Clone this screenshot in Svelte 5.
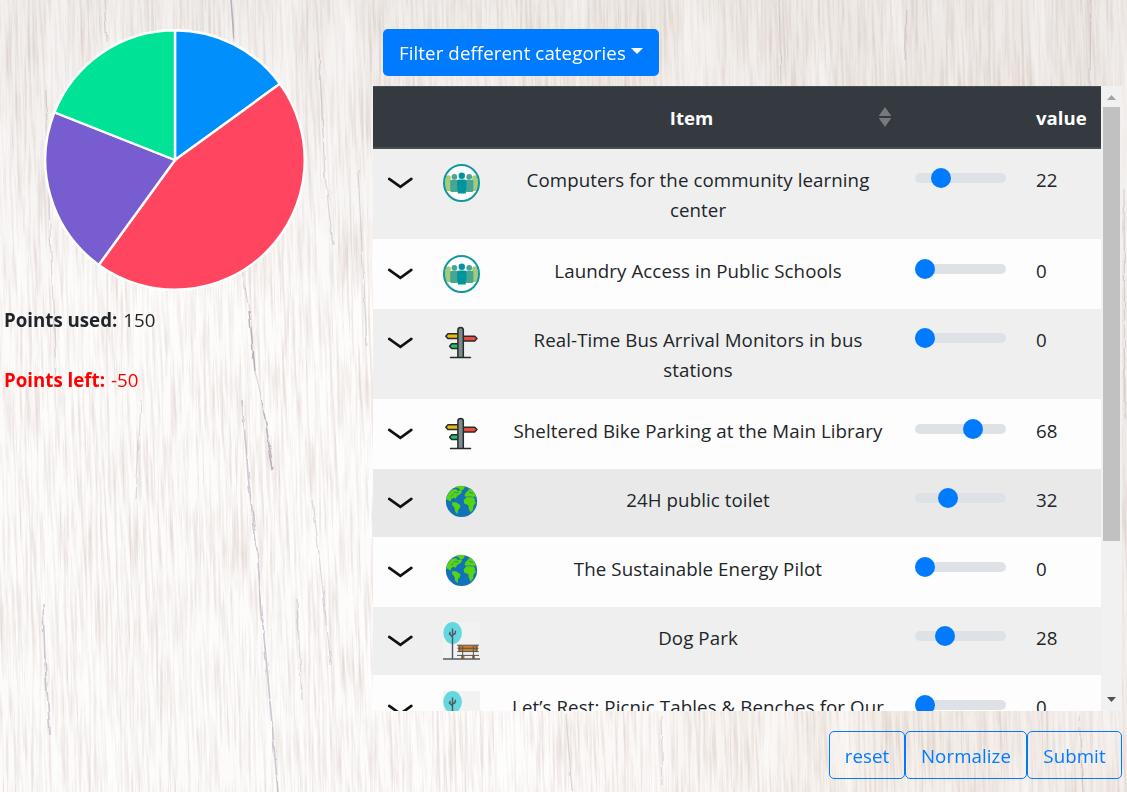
<script>
  const items = [
    { lines: ['Computers for the community learning', 'center'], icon: 'people', value: 22 },
    { lines: ['Laundry Access in Public Schools'], icon: 'people', value: 0 },
    { lines: ['Real-Time Bus Arrival Monitors in bus', 'stations'], icon: 'sign', value: 0 },
    { lines: ['Sheltered Bike Parking at the Main Library'], icon: 'sign', value: 68 },
    { lines: ['24H public toilet'], icon: 'globe', value: 32, active: true },
    { lines: ['The Sustainable Energy Pilot'], icon: 'globe', value: 0 },
    { lines: ['Dog Park'], icon: 'park', value: 28 },
    { lines: ['Let’s Rest: Picnic Tables & Benches for Our'], icon: 'park', value: 0 }
  ];

  const shares = [
    { from: 0, to: 0.15, color: '#008ffb' },
    { from: 0.15, to: 0.6, color: '#ff4560' },
    { from: 0.6, to: 0.81, color: '#775dd0' },
    { from: 0.81, to: 1, color: '#00e396' }
  ];
  const point = (t) => `${131 + 129.7 * Math.sin(t * 2 * Math.PI)} ${131 - 129.7 * Math.cos(t * 2 * Math.PI)}`;
  const slice = (s) => `M131 131L${point(s.from)}A129.7 129.7 0 0 1 ${point((s.from + s.to) / 2)}A129.7 129.7 0 0 1 ${point(s.to)}Z`;
</script>

<svg class="wood" width="1127" height="792" viewBox="0 0 1127 792" aria-hidden="true">
  <defs>
    <linearGradient id="tone" x1="0" y1="0.35" x2="1" y2="0.1">
      <stop offset="0" stop-color="#fcfbfa" /><stop offset="0.3" stop-color="#fdfcfb" />
      <stop offset="0.6" stop-color="#f4eee9" /><stop offset="1" stop-color="#efe9e6" />
    </linearGradient>
    <linearGradient id="shade" x1="0" y1="0" x2="0" y2="1">
      <stop offset="0" stop-color="#eae6e2" stop-opacity="0.75" /><stop offset="0.4" stop-color="#ebe6e3" stop-opacity="0" />
      <stop offset="1" stop-color="#ebe6e3" stop-opacity="0" />
    </linearGradient>
    <filter id="grain" x="0" y="0" width="1" height="1" color-interpolation-filters="sRGB">
      <feTurbulence type="fractalNoise" baseFrequency="0.42 0.014" numOctaves="4" seed="7" />
      <feColorMatrix values="0 0 0 0 0.75  0 0 0 0 0.65  0 0 0 0 0.62  2.3 0 0 0 -0.98" />
    </filter>
    <filter id="light" x="0" y="0" width="1" height="1" color-interpolation-filters="sRGB">
      <feTurbulence type="fractalNoise" baseFrequency="0.035 0.005" numOctaves="4" seed="19" />
      <feColorMatrix values="0 0 0 0 1  0 0 0 0 1  0 0 0 0 1  0 2.6 0 0 -1.1" />
    </filter>
    <filter id="rough" filterUnits="userSpaceOnUse" x="0" y="0" width="1127" height="792">
      <feTurbulence type="fractalNoise" baseFrequency="0.12 0.06" numOctaves="2" seed="3" />
      <feDisplacementMap in="SourceGraphic" scale="4" xChannelSelector="R" yChannelSelector="G" />
      <feGaussianBlur stdDeviation="0.7 0.5" />
    </filter>
  </defs>
  <rect width="1127" height="792" fill="url(#tone)" />
  <rect width="1127" height="792" fill="url(#shade)" />
  <g transform="rotate(-1.5 560 400)">
    <rect x="-30" y="-30" width="1190" height="860" filter="url(#grain)" opacity="0.42" />
    <rect x="-30" y="-30" width="1190" height="860" filter="url(#light)" opacity="0.5" />
  </g>
  <g class="cracks" filter="url(#rough)">
    <path d="M104 0L107 42M231 0L234 42M319 50L325 175L333 245M242 270L249 310L255 370L263 405L273 470" />
    <path class="deep" d="M231 0L234 38M249 310L255 370M262 400L273 470M242 400L249 485L257 550L263 625L269 690L278 792M43 605L45 660L50 735" />
    <path d="M46 90L50 230L56 375M297 600L302 700M313 500L331 665M358 170L367 345M141 400L136 500" />
    <path d="M1091 0L1090 86M907 10L905 60M779 0L781 85M1079 715L1083 792M1124 190L1125 420M566 714L572 792M661 716L663 785" />
  </g>
</svg>

<main>
  <aside>
    <svg class="pie" width="262" height="262" viewBox="0 0 262 262">
      {#each shares as s}
        <path d={slice(s)} fill={s.color} stroke="#fff" stroke-width="2.4" />
      {/each}
    </svg>
    <p><b>Points used:</b> 150</p>
    <p class="over"><b>Points left:</b> -50</p>
  </aside>

  <section>
    <button class="filter">Filter defferent categories<span class="caret"></span></button>

    <div class="pane">
      <div class="table">
        <div class="row head">
          <span></span><span></span>
          <div class="item"><span class="label">Item</span>
            <svg width="14" height="20" viewBox="0 0 14 20"><path d="M7 0L13.3 9H.7ZM.7 11H13.3L7 20Z" fill="#76797d" /></svg>
          </div>
          <span></span>
          <span class="value">value</span>
        </div>
        {#each items as item, i}
          <div class="row" class:tall={item.lines.length > 1} class:odd={i % 2 === 0} class:active={item.active}>
            <svg class="chevron" width="26" height="14" viewBox="0 0 26 14"><path d="M2.2 1.9L13.4 9.9L24.4 1.9" /></svg>
            <svg class="icon" width="37" height="38" viewBox="0 0 37 38">
              {#if item.icon === 'people'}
                <ellipse cx="18.5" cy="19" rx="17.6" ry="18.1" fill="#fff" />
                <g fill="#a3cd7a"><circle cx="5.2" cy="14" r="2.7" /><circle cx="31.8" cy="14" r="2.7" /><rect x="1.4" y="15.6" width="7" height="11.4" rx="1.5" /><rect x="28.6" y="15.6" width="7" height="11.4" rx="1.5" /></g>
                <g fill="#48a594"><circle cx="11.4" cy="12.8" r="2.9" /><circle cx="26.2" cy="12.8" r="2.9" /><rect x="7.2" y="15.8" width="8.4" height="12.2" rx="1.4" /><rect x="22" y="15.8" width="8.4" height="12.2" rx="1.4" /></g>
                <g fill="#00949c"><circle cx="18.8" cy="11.7" r="3.2" /><path d="M14.2 17.5q0-2 2-2h5.2q2 0 2 2V26h-.6v3.6H14.8V26h-.6Z" /></g>
                <ellipse cx="18.5" cy="19" rx="17.5" ry="18" fill="none" stroke="#1496a1" stroke-width="2" />
              {:else if item.icon === 'sign'}
                <g transform="translate(0 2.6)" stroke="#272b2c" stroke-width="1.5" stroke-linejoin="round">
                  <path d="M16 7.2H5L2.8 9.6 5 12H16Z" fill="#e8b90e" />
                  <path d="M19 9.6H31.7L34 12 31.7 14.4H19Z" fill="#f04a3b" />
                  <path d="M16 17.2H8.7L6.6 19.6 8.7 22H16Z" fill="#28bd68" />
                  <path d="M14.9 30.6V3.2Q15 .8 17.6.8T20.3 3.2V30.6" fill="#7c8b8e" />
                  <path d="M7.5 31H27.5" stroke-linecap="round" />
                </g>
              {:else if item.icon === 'globe'}
                <g transform="translate(0 1)">
                  <circle cx="18.5" cy="16.5" r="15.6" fill="#1171b9" />
                  <g fill="#58d30f">
                    <path d="M3.2 14Q4.5 8.3 9 4.7L13 4 15 6 18 5.3 19 7 17.2 9.3 14.5 10.8 12.5 13.7 10.2 12.7 7.9 14.5 8.2 16.8 5.8 15.4Z" />
                    <path d="M12.4 2.1Q17-.1 22.2 1.3L20.5 4.5 17.2 6 16.2 3.7Z" />
                    <path d="M9.2 17.3L13 17.2 17.5 20.2 16.8 23.3 15 25 14.6 29.2 12.4 27 11.3 22.4 9 19.7Z" />
                    <path d="M22.5 8L25.7 5 25.4 3.6 28.4 4.6Q32 7.8 33.3 12L30 11.2 32.2 15 31.6 17 33.4 17 30.5 20.7 30 24.7 27.5 27.5 25.7 23.5 25.4 20.2 21.2 18.4 20.6 15.2 23.4 12.4 21.5 11Z" />
                  </g>
                  <path d="M22.5 12L27 11.6 29.8 12.5M11 7.4L15.4 7.8M26 7.2L30 8.4M8 11.5L10.5 9" stroke="#2488a0" stroke-width=".9" fill="none" />
                </g>
              {:else}
                <rect width="37" height="38" fill="#f2f2f2" />
                <ellipse cx="9.6" cy="11" rx="9.3" ry="11" fill="#65d8df" />
                <path d="M9.5 37V6.5M9.5 15L7 12.5V9.8M9.5 13.5L12.4 10.8V8.8M7 12.3L5.8 11.7M11 12L12.5 11.8" stroke="#4b5661" stroke-width="1.4" fill="none" />
                <path d="M18 33h3.5v4H18ZM29 33h3v4h-3Z" fill="#c17c27" />
                <path d="M15 23.3h20v6H15Z" fill="#cb802a" />
                <path d="M14 23.2H36M14.5 26.3H35.5M14.3 29.6H35.7M14 33.4H36M16.8 23V29.7M33.3 23V29.7M19.7 24V37M30.4 24V37" stroke="#555657" stroke-width="1" fill="none" />
                <path d="M0 37H37" stroke="#555b60" stroke-width="1.5" />
              {/if}
            </svg>
            <div class="item">{#each item.lines as line}<div>{line}</div>{/each}</div>
            <div class="track"><span class="knob" style="margin-left: {item.value * 0.71}px"></span></div>
            <span class="value">{item.value}</span>
          </div>
        {/each}
      </div>
      <div class="scroll">
        <svg width="21" height="21" viewBox="0 0 21 21"><path d="M6 14H15L10.5 9Z" fill="#a3a3a3" /></svg>
        <span class="thumb"></span>
        <svg width="21" height="21" viewBox="0 0 21 21"><path d="M6 7H15L10.5 12Z" fill="#505050" /></svg>
      </div>
    </div>

    <div class="actions"><button>reset</button><button>Normalize</button><button>Submit</button></div>
  </section>
</main>

<style>
  :global(body) { margin: 0; overflow: hidden; }
  .wood { position: fixed; inset: 0; z-index: -1; }
  .cracks path { fill: none; stroke: #a594a0; stroke-width: 1.2; opacity: 0.35; }
  .cracks .deep { stroke: #8d8098; stroke-width: 1.7; opacity: 0.4; }
  main {
    display: flex; width: 1127px; height: 792px; overflow: hidden; color: #212529;
    font: 400 18.7px/30px "Open Sans", "Noto Sans", sans-serif; letter-spacing: 0.09px;
  }
  button { font: inherit; letter-spacing: inherit; box-sizing: border-box; white-space: nowrap; }
  aside { width: 373px; padding-top: 29px; box-sizing: border-box; }
  .pie { display: block; margin: 0 0 14px 43.6px; }
  p { margin: 0 0 30px 4px; }
  b { letter-spacing: 0; font-weight: 700; margin-right: 1px; }
  .over { color: #f00; }
  section { width: 749px; display: flex; flex-direction: column; }
  .filter {
    margin: 29px 0 10px 10px; width: 276px; height: 47px; border: 0; border-radius: 5px;
    padding: 0 0 0 16px; background: #007bff; color: #fff; text-align: left;
    display: flex; align-items: center;
  }
  .caret { margin: -3px 0 0 5px; border: 6px solid transparent; border-top-color: #fff; border-bottom: 0; }
  .pane { height: 625px; display: flex; overflow: hidden; }
  .table { width: 728px; }
  .row {
    display: grid; grid-template-columns: 54px 69px 404px 121px 80px; align-items: start;
    height: 70px; padding-top: 1px; box-sizing: border-box; background: #fdfdfd;
  }
  .row.odd { height: 68px; padding-top: 0; background: #efefef; }
  .row.odd.tall { height: 90px; }
  .row.odd.active { background: #e9e9e9; }
  .head {
    height: 63px; background: #343a40; color: #fff; font-weight: 700; align-items: center;
    border-top: 1px solid #454d55; border-bottom: 2px solid #454d55; padding: 0;
    font-size: 18.6px; letter-spacing: 0;
  }
  .head .item { display: grid; grid-template-columns: 1fr 14px; padding: 0 8px 0 0; align-items: center; }
  .head .label { padding: 2px 0 0 9px; }
  .head .value { padding-top: 2px; }
  .chevron { margin: 27.5px 0 0 14px; }
  .chevron path { fill: none; stroke: #111; stroke-width: 2.6; stroke-linecap: round; }
  .icon { margin: 15px 0 0 16px; }
  .item { text-align: center; white-space: nowrap; }
  .row:not(.head) .item, .row:not(.head) .value { padding-top: 16px; }
  .value { padding-left: 15px; }
  .track { margin: 24px 0 0 15px; width: 91px; height: 10px; border-radius: 5px; background: #dee2e6; display: flex; align-items: center; }
  .knob { flex: none; width: 20px; height: 20px; border-radius: 50%; background: #007bff; }
  .scroll { width: 21px; background: #f1f1f1; display: flex; flex-direction: column; }
  .scroll svg { flex: none; }
  .thumb { width: 17px; height: 434px; margin: 0 2px auto; background: #c1c1c1; }
  .actions { display: flex; justify-content: flex-end; margin-top: 20px; }
  .actions button {
    width: 76px; height: 48px; padding: 2px 0 0; border: 1px solid #007bff; border-radius: 5px;
    background: transparent; color: #007bff;
  }
  .actions button:nth-child(2) { width: 122px; }
  .actions button:nth-child(3) { width: 95px; }
</style>
